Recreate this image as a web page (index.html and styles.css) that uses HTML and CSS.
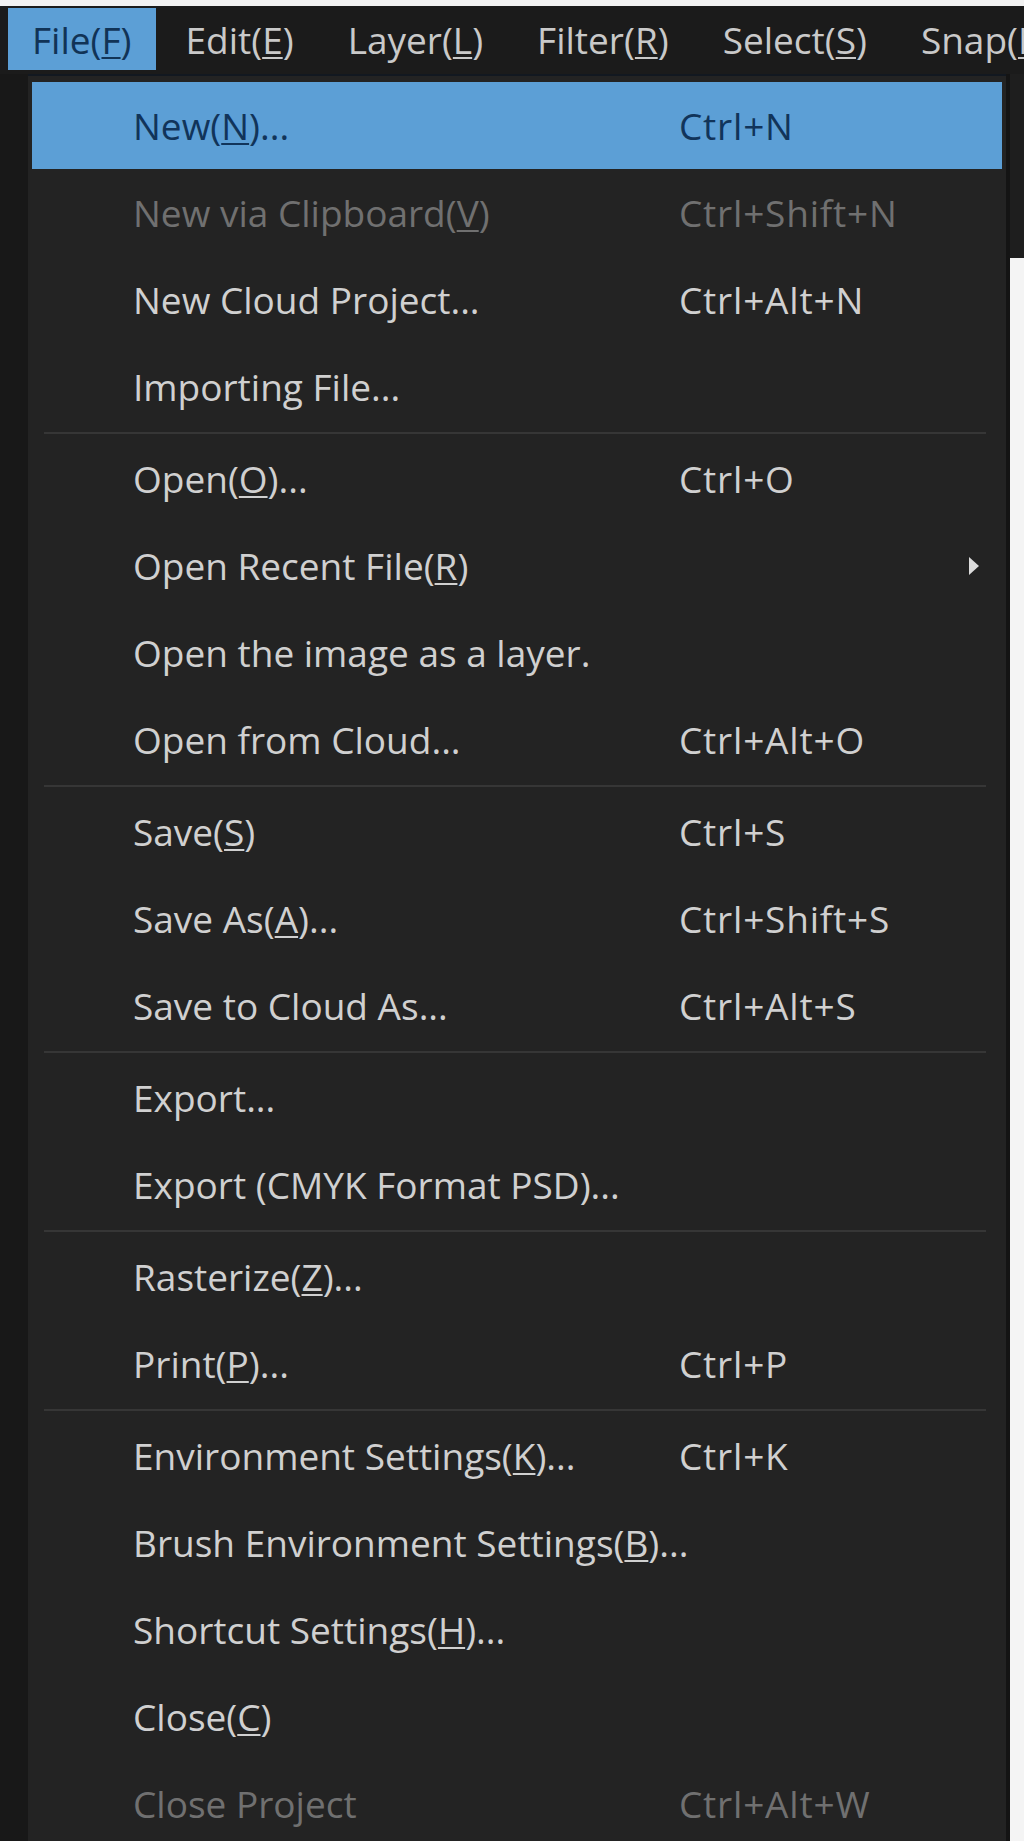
FILE: index.html
```html
<!DOCTYPE html>
<html>
<head>
<meta charset="utf-8">
<link rel="stylesheet" href="styles.css">
</head>
<body>
<div class="screen">
  <div class="topstrip"></div>
  <nav class="menubar">
    <span class="mb-item active">File(<u>F</u>)</span>
    <span class="mb-item">Edit(<u>E</u>)</span>
    <span class="mb-item">Layer(<u>L</u>)</span>
    <span class="mb-item">Filter(<u>R</u>)</span>
    <span class="mb-item">Select(<u>S</u>)</span>
    <span class="mb-item">Snap(<u>N</u>)</span>
  </nav>
  <div class="workspace">
    <div class="gutter"></div>
    <div class="popup">
      <div class="row hl"><span class="label">New(<u>N</u>)...</span><span class="key">Ctrl+N</span><span class="sub"></span></div>
      <div class="row disabled"><span class="label">New via Clipboard(<u>V</u>)</span><span class="key">Ctrl+Shift+N</span><span class="sub"></span></div>
      <div class="row"><span class="label">New Cloud Project...</span><span class="key">Ctrl+Alt+N</span><span class="sub"></span></div>
      <div class="row"><span class="label">Importing File...</span><span class="key"></span><span class="sub"></span></div>
      <div class="sep"></div>
      <div class="row"><span class="label">Open(<u>O</u>)...</span><span class="key">Ctrl+O</span><span class="sub"></span></div>
      <div class="row"><span class="label">Open Recent File(<u>R</u>)</span><span class="key"></span><span class="sub"><i class="arrow"></i></span></div>
      <div class="row"><span class="label">Open the image as a layer.</span><span class="key"></span><span class="sub"></span></div>
      <div class="row"><span class="label">Open from Cloud...</span><span class="key">Ctrl+Alt+O</span><span class="sub"></span></div>
      <div class="sep"></div>
      <div class="row"><span class="label">Save(<u>S</u>)</span><span class="key">Ctrl+S</span><span class="sub"></span></div>
      <div class="row"><span class="label">Save As(<u>A</u>)...</span><span class="key">Ctrl+Shift+S</span><span class="sub"></span></div>
      <div class="row"><span class="label">Save to Cloud As...</span><span class="key">Ctrl+Alt+S</span><span class="sub"></span></div>
      <div class="sep"></div>
      <div class="row"><span class="label">Export...</span><span class="key"></span><span class="sub"></span></div>
      <div class="row"><span class="label">Export (CMYK Format PSD)...</span><span class="key"></span><span class="sub"></span></div>
      <div class="sep"></div>
      <div class="row"><span class="label">Rasterize(<u>Z</u>)...</span><span class="key"></span><span class="sub"></span></div>
      <div class="row"><span class="label">Print(<u>P</u>)...</span><span class="key">Ctrl+P</span><span class="sub"></span></div>
      <div class="sep"></div>
      <div class="row"><span class="label">Environment Settings(<u>K</u>)...</span><span class="key">Ctrl+K</span><span class="sub"></span></div>
      <div class="row"><span class="label">Brush Environment Settings(<u>B</u>)...</span><span class="key"></span><span class="sub"></span></div>
      <div class="row"><span class="label">Shortcut Settings(<u>H</u>)...</span><span class="key"></span><span class="sub"></span></div>
      <div class="row"><span class="label">Close(<u>C</u>)</span><span class="key"></span><span class="sub"></span></div>
      <div class="row disabled"><span class="label">Close Project</span><span class="key">Ctrl+Alt+W</span><span class="sub"></span></div>
    </div>
    <div class="behind">
      <div class="behind-dark"></div>
      <div class="behind-white"></div>
    </div>
  </div>
</div>
</body>
</html>
```

FILE: styles.css
```css
html, body {
  margin: 0;
  padding: 0;
  background: #1c1c1c;
}
.screen {
  width: 1024px;
  height: 1841px;
  overflow: hidden;
  font-family: "Open Sans", "Noto Sans", sans-serif;
  font-size: 37px;
  letter-spacing: 0;
  color: #d0d0d0;
  display: flex;
  flex-direction: column;
}
.topstrip {
  height: 6px;
  background: #f2f2f2;
  flex: none;
}
.menubar {
  height: 68px;
  flex: none;
  box-sizing: border-box;
  padding: 2px 0 4px 8px;
  display: flex;
  background: #1b1b1b;
  white-space: nowrap;
  overflow: hidden;
}
.mb-item {
  display: flex;
  align-items: center;
  padding: 0 24px;
  margin-right: 6px;
  color: #c9c9c9;
}
.mb-item.active {
  background: #5c9fd6;
  color: #113356;
}
u {
  text-decoration: underline;
  text-underline-offset: 3px;
  text-decoration-thickness: 2px;
}
.workspace {
  flex: 1;
  display: flex;
  min-height: 0;
}
.gutter {
  width: 28px;
  flex: none;
  background: #181818;
}
.popup {
  width: 978px;
  flex: none;
  box-sizing: border-box;
  padding: 6px 4px 0 4px;
  background: #232323;
  border-top: 2px solid #121820;
}
.row {
  height: 87px;
  display: grid;
  grid-template-columns: 546px 1fr auto;
  align-items: center;
  padding-left: 101px;
  padding-right: 23px;
  white-space: nowrap;
}
.key {
  letter-spacing: 0.8px;
}
.row.hl {
  background: #5c9fd6;
  color: #11345a;
}
.row.disabled {
  color: #707070;
}
.sub {
  width: 10px;
  display: flex;
  align-items: center;
}
.arrow {
  display: block;
  width: 0;
  height: 0;
  border-left: 10px solid #dcdcdc;
  border-top: 9px solid transparent;
  border-bottom: 9px solid transparent;
}
.sep {
  height: 5px;
  display: flex;
  align-items: center;
  padding: 0 16px 0 12px;
}
.sep::before {
  content: "";
  flex: 1;
  height: 2px;
  background: #363636;
}
.behind {
  flex: 1;
  display: flex;
  flex-direction: column;
  border-left: 4px solid #141414;
}
.behind-dark {
  height: 184px;
  background: #1e1e1e;
}
.behind-white {
  flex: 1;
  background: #f4f4f4;
}
```
